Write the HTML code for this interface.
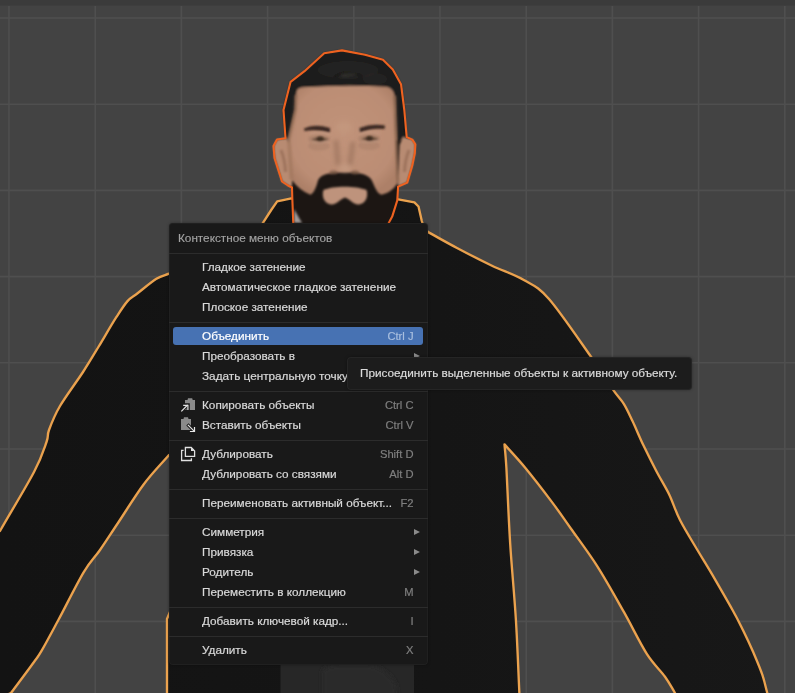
<!DOCTYPE html>
<html><head><meta charset="utf-8">
<style>
html,body{margin:0;padding:0;width:795px;height:693px;overflow:hidden;background:#434343;}
body{position:relative;font-family:"Liberation Sans",sans-serif;}
svg.scene{position:absolute;left:0;top:0;}
.menu{will-change:transform;position:absolute;left:169px;top:223px;width:259px;height:442px;background:#191919;border-radius:4px;box-shadow:inset 0 0 0 1px rgba(255,255,255,0.03),0 0 3px rgba(0,0,0,0.35);}
.row{-webkit-text-stroke:0.2px;position:absolute;left:0;width:259px;height:20px;color:#d9d9d9;font-size:11.75px;line-height:20px;}
.row .t{position:absolute;left:33px;top:0;white-space:nowrap;}
.row .k{position:absolute;right:14.5px;top:0;color:#7f7f7f;white-space:nowrap;font-size:11.2px;}
.row .a{position:absolute;right:8px;top:7px;width:0;height:0;border-left:6px solid #8a8a8a;border-top:3.5px solid transparent;border-bottom:3.5px solid transparent;}
.hdr{-webkit-text-stroke:0.15px;position:absolute;left:9px;top:5px;color:#a3a3a3;font-size:11.75px;line-height:20px;white-space:nowrap;}
.sep{position:absolute;left:0;width:259px;height:1px;background:#2c2c2c;}
.hl{position:absolute;left:4px;top:104px;width:250px;height:18px;background:#4772b3;border-radius:3px;}
.tip{will-change:transform;position:absolute;left:347px;top:357px;width:345px;height:32.5px;background:#1c1c1c;border-radius:4px;color:#dadada;font-size:11.75px;line-height:32px;box-shadow:inset 0 0 0 1px rgba(255,255,255,0.045),0 0 3px rgba(0,0,0,0.35);}
.tip span{-webkit-text-stroke:0.2px;position:absolute;left:13px;top:0;white-space:nowrap;}
</style></head>
<body>
<svg class="scene" width="795" height="693" viewBox="0 0 795 693">
  <defs><linearGradient id="jk" gradientUnits="userSpaceOnUse" x1="0" y1="0" x2="795" y2="0"><stop offset="0" stop-color="#131313"/><stop offset="0.55" stop-color="#151515"/><stop offset="1" stop-color="#181818"/></linearGradient></defs>
  <rect x="0" y="0" width="795" height="693" fill="#434343"/>
  <rect x="0" y="0" width="795" height="5.5" fill="#3b3b3b"/>
  <g stroke="#4f4f4f" stroke-width="1.6">
    <line x1="9" y1="6" x2="9" y2="693"/>
    <line x1="95.2" y1="6" x2="95.2" y2="693"/>
    <line x1="181.4" y1="6" x2="181.4" y2="693"/>
    <line x1="267.6" y1="6" x2="267.6" y2="693"/>
    <line x1="353.8" y1="6" x2="353.8" y2="693"/>
    <line x1="440" y1="6" x2="440" y2="693"/>
    <line x1="526.2" y1="6" x2="526.2" y2="693"/>
    <line x1="612.4" y1="6" x2="612.4" y2="693"/>
    <line x1="698.6" y1="6" x2="698.6" y2="693"/>
    <line x1="784.8" y1="6" x2="784.8" y2="693"/>
    <line x1="0" y1="18" x2="795" y2="18"/>
    <line x1="0" y1="104.2" x2="795" y2="104.2"/>
    <line x1="0" y1="190.4" x2="795" y2="190.4"/>
    <line x1="0" y1="276.6" x2="795" y2="276.6"/>
    <line x1="0" y1="362.8" x2="795" y2="362.8"/>
    <line x1="0" y1="449" x2="795" y2="449"/>
    <line x1="0" y1="535.2" x2="795" y2="535.2"/>
    <line x1="0" y1="621.4" x2="795" y2="621.4"/>
  </g>
  <!-- jacket -->
  <path id="jacket" d="M169,273.7 C164.8,275.4 161.6,275.6 156.4,278.8 C151.2,282.1 142.4,289.5 137.6,293.2 C132.8,296.9 131.1,297 127.5,301.1 C123.9,305.2 120.8,310.2 116,317.7 C111.2,325.2 104.5,336.9 99,346 C93.5,355.1 89.5,362 83,372 C76.5,382 65.7,396.3 60,406 C54.3,415.7 51.2,424 49,430 C46.8,436 49,435 46.5,442 C44,449 41.8,457.2 34,472 C26.2,486.8 11.3,511.3 0,531 L-5,531 L-5,700 L11,693 C18.7,682.7 28.9,669.1 34,662 C39.1,654.9 37.7,657.4 41.8,650.4 C45.9,643.4 51.5,632.8 58.5,619.8 C65.5,606.8 76.7,584 83.6,572.4 C90.5,560.8 94.2,558.3 100,550 C105.8,541.7 111,533.4 118.3,522.5 C125.6,511.6 135.2,495.8 143.6,484.5 C152,473.2 160.5,464.8 169,455 L175,455 L175,600 L167,619 L167,700 L519.7,700 C518.4,673.3 517.5,645.8 515.9,619.8 C514.3,593.8 511.8,569.2 510.2,543.9 C508.6,518.6 507.3,484.6 506.4,468 C505.4,451.4 505.1,452.3 504.5,444.4 C511.5,452.3 517.5,458.4 525.4,468 C533.3,477.6 544.4,492 552,502.1 C559.6,512.2 563.4,518 571,528.7 C578.6,539.5 588.7,552.7 597.5,566.6 C606.3,580.5 615.8,597.7 624,612.2 C632.2,626.8 640,643.1 646.8,653.9 C653.6,664.6 660.3,670.2 665,676.7 C669.7,683.2 671.7,687.6 675,693 L676,700 L768,700 L767.3,693 C765.6,686.9 764.6,681.5 762.3,674.7 C760,667.9 756.5,659.8 753.3,652.3 C750,644.8 746.3,636.9 742.8,629.8 C739.3,622.7 737.5,618.9 732.4,609.8 C727.3,600.6 718.2,584.9 712.4,574.9 C706.6,564.9 702.8,559.1 697.4,550 C692,540.9 684.7,529.2 680,520 C675.3,510.8 673.2,502.9 669.3,494.7 C665.3,486.5 660.6,479.3 656.3,471 C652,462.7 647.3,453.3 643.3,445 C639.3,436.7 635.8,427.9 632.5,421 C629.2,414.1 627,409 623.8,403.8 C620.5,398.6 618.5,397.7 613,389.7 C607.5,381.7 601.2,371.1 590.5,356 C579.8,340.9 560.1,311.7 549,299 C537.9,286.3 533.3,285.6 523.8,280 C514.3,274.4 503.1,271 492,265.7 C480.9,260.4 467.6,253.6 457,248 C446.4,242.4 438.1,237.6 428.6,232.4 L424,228 L421.8,221 L418.5,206.5 L414.4,202.4 L398.3,199.4 L300,199 L291.3,198.4 L277.2,201.4 L271.2,210 L263.1,222.6 L256,233.6 L240,250 L169,273.7" fill="url(#jk)" stroke="#eba24e" stroke-width="2.35" stroke-linejoin="round"/>
<!-- shirt -->
  <rect x="280.5" y="655" width="133.5" height="40" fill="#272727"/>
  <path d="M322,700 L322,672 Q324,665 340,665 L368,665 Q385,666 396,684 L398,700 Z" fill="#2c2c2c" filter="url(#bl3)"/>
  <!-- head -->
  <defs>
    <filter id="bl1" x="-20%" y="-20%" width="140%" height="140%"><feGaussianBlur stdDeviation="0.9"/></filter>
    <filter id="bl2" x="-50%" y="-50%" width="200%" height="200%"><feGaussianBlur stdDeviation="1.2"/></filter>
    <filter id="bl3" x="-50%" y="-50%" width="200%" height="200%"><feGaussianBlur stdDeviation="2.2"/></filter>
    <radialGradient id="skin" cx="0.5" cy="0.45" r="0.6">
      <stop offset="0" stop-color="#c1937a"/>
      <stop offset="0.8" stop-color="#bb8d74"/>
      <stop offset="1" stop-color="#ad8068"/>
    </radialGradient>
  </defs>
  <path d="M293.3,224 L292.3,198.4 L292,187.5 L288,185.5 L282,181.5 L274.5,158 L273.5,146 L277,139.5 L285.5,138.2 L283.5,110 L290.6,81.8 L304.5,71.2 L324.2,53.2 L342,50.4 L365,54.8 L383,59.7 L392.8,69.5 L401,84.2 L404.3,110 L406.7,137.1 L412.3,139.6 L415.3,144.2 L414.8,153.3 L412.3,165.4 L407.2,182.6 L398.1,186.6 L397.3,200.4 L392.2,216.6 L388.2,224 Z" fill="#1c1613"/>
  <g filter="url(#bl1)">
    <!-- hair -->
    <path d="M342,50.4 L324.2,53.2 L304.5,71.2 L290.6,81.8 L283.3,110 L286,140 L296,140 L296,95 L301.3,87.5 L345.4,85 L386.3,86.7 L394.5,95.7 L396,140 L405,140 L404.3,110 L401,84.2 L392.8,69.5 L383,59.7 L365,54.8 Z" fill="#1e1d1c"/>
    <ellipse cx="348" cy="70" rx="30" ry="9" fill="#2a2826" opacity="0.55"/>
    <ellipse cx="375" cy="79" rx="12" ry="6" fill="#2a2826" opacity="0.5"/>
    <path d="M334,77 Q346,69 362,76" stroke="#141211" stroke-width="2" fill="none" opacity="0.7"/>
    <path d="M340,74 Q350,71 358,74 Q350,78 342,77 Z" fill="#353331" opacity="0.6"/>
    <!-- ears -->
    <path d="M287,138.2 L277,139.5 L273.5,146 L274.5,158 L282,181.5 L288,185.5 L292,187.5 L292,175 L290,145 Z" fill="#b88b72"/>
    <path d="M403,137.1 L412.3,139.6 L415.3,144.2 L414.8,153.3 L412.3,165.4 L407.2,182.6 L398.1,186.6 L398,175 L399.5,145 Z" fill="#b88b72"/>
    <path d="M281,150 Q285,160 285.5,172" stroke="#8a634e" stroke-width="3" fill="none" opacity="0.6"/>
    <path d="M409,150 Q405,160 404.5,172" stroke="#8a634e" stroke-width="3" fill="none" opacity="0.6"/>
    <!-- face skin -->
    <path d="M296.4,92.4 Q297,87.8 303,87.3 Q345,84.5 386.3,86.7 Q393.5,88 394.5,95.7 L395,110 L396,140 L397.7,182.9 Q391,193 381.4,194.8 C376,193 374.5,185 371,179 C366,173 356,172.5 345,172.5 C334,172.5 324,173 319.5,178 C318,180 317.6,181 317.6,182 Q314.5,193 310.5,194.8 Q300,191 291.4,179.6 L289,150 L288.5,140 L295.5,110 Z" fill="url(#skin)"/>
    <!-- lip/chin patch -->
    <path d="M323.5,190 C333,185.5 356,185.5 366.5,190 C368.5,196 366,203.5 359,204.5 C354,205 351,200 345,197.5 C339,200 336,205 331,204.5 C324,203.5 321.5,196 323.5,190 Z" fill="#be937b"/>
  </g>
  <g filter="url(#bl2)">
    <!-- face edge shading -->
    <path d="M296,95 L295.5,110 L289,140 L291.4,179.6" stroke="#9a7058" stroke-width="4" fill="none" opacity="0.5"/>
    <path d="M394.5,95.7 L395,110 L396,140 L397.7,182.9" stroke="#9a7058" stroke-width="4" fill="none" opacity="0.5"/>
    <!-- eye bags -->
    <ellipse cx="319" cy="146" rx="11" ry="4.5" fill="#a47c66" opacity="0.45"/>
    <ellipse cx="369" cy="145.5" rx="11" ry="4.5" fill="#a47c66" opacity="0.45"/>
    <ellipse cx="319" cy="139" rx="11" ry="5" fill="#a37b65" opacity="0.5"/>
    <ellipse cx="369" cy="138.5" rx="11" ry="5" fill="#a37b65" opacity="0.5"/>
  </g>
  <g filter="url(#bl3)">
    <!-- nose shading broad -->
    <path d="M336,140 L338,165" stroke="#9a725b" stroke-width="5" fill="none" opacity="0.7"/>
    <path d="M353,142 L350,165" stroke="#9a725b" stroke-width="5" fill="none" opacity="0.7"/>
    <ellipse cx="345" cy="168" rx="6" ry="4" fill="#c69c83" opacity="0.7"/>
    <ellipse cx="344" cy="127" rx="8" ry="6" fill="#c59b82" opacity="0.5"/>
  </g>
  <g filter="url(#bl1)">
    <ellipse cx="333.5" cy="172.5" rx="4" ry="2.2" fill="#6e4e3e" opacity="0.6"/>
    <ellipse cx="355" cy="172.5" rx="4" ry="2.2" fill="#6e4e3e" opacity="0.6"/>
    <!-- eyebrows -->
    <path d="M304,128.5 Q314,123.5 330,128 L330,132.5 Q316,129 304.5,131 Z" fill="#3a2820"/>
    <path d="M359.5,128 Q372,123 385,125.5 L384.5,129 Q372,127.5 360,132.5 Z" fill="#3a2820"/>
    <!-- upper lid light -->
    <path d="M310,134 Q320,132 330,134.5" stroke="#caa08a" stroke-width="1.5" fill="none" opacity="0.6"/>
    <path d="M360,134 Q370,131.5 380,133.5" stroke="#caa08a" stroke-width="1.5" fill="none" opacity="0.6"/>
    <!-- eyes -->
    <path d="M311,139.5 Q320,134.5 329,139.5 Q320,142.5 311,139.5 Z" fill="#6a4f3e"/>
    <path d="M361,139 Q370,134 379,139 Q370,142 361,139 Z" fill="#6a4f3e"/>
    <ellipse cx="320.2" cy="138.9" rx="3.6" ry="2.6" fill="#3f2e22"/>
    <ellipse cx="369.5" cy="138.4" rx="3.6" ry="2.6" fill="#3f2e22"/>
    <path d="M312,142.3 Q320,144 328.5,141.5" stroke="#cfa890" stroke-width="1.2" fill="none" opacity="0.55"/>
    <path d="M362,141.8 Q370,143.5 378.5,141" stroke="#cfa890" stroke-width="1.2" fill="none" opacity="0.55"/>
  </g>
  <path d="M294,209 L294,223 L302,223 Z" fill="#a09a98" filter="url(#bl1)"/>
  <!-- head outline -->
  <path d="M293.3,224 L292.3,198.4 L292,187.5 L288,185.5 L282,181.5 L274.5,158 L273.5,146 L277,139.5 L285.5,138.2 L283.5,110 L290.6,81.8 L304.5,71.2 L324.2,53.2 L342,50.4 L365,54.8 L383,59.7 L392.8,69.5 L401,84.2 L404.3,110 L406.7,137.1 L412.3,139.6 L415.3,144.2 L414.8,153.3 L412.3,165.4 L407.2,182.6 L398.1,186.6 L397.3,200.4 L392.2,216.6 L388.2,224" fill="none" stroke="#ee6220" stroke-width="2.1" stroke-linejoin="round"/>
</svg>

<div class="menu">
  <div class="hdr">Контекстное меню объектов</div>
  <div class="sep" style="top:30px"></div>
  <div class="row" style="top:34px"><span class="t">Гладкое затенение</span></div>
  <div class="row" style="top:54px"><span class="t">Автоматическое гладкое затенение</span></div>
  <div class="row" style="top:74px"><span class="t">Плоское затенение</span></div>
  <div class="sep" style="top:99px"></div>
  <div class="hl"></div>
  <div class="row" style="top:103px"><span class="t" style="color:#fff">Объединить</span><span class="k" style="color:#a9bfdf">Ctrl J</span></div>
  <div class="row" style="top:123px"><span class="t">Преобразовать в</span><span class="a"></span></div>
  <div class="row" style="top:143px"><span class="t">Задать центральную точку</span><span class="a"></span></div>
  <div class="sep" style="top:168px"></div>
  <div class="row" style="top:172px"><span class="t">Копировать объекты</span><span class="k">Ctrl C</span></div>
  <div class="row" style="top:192px"><span class="t">Вставить объекты</span><span class="k">Ctrl V</span></div>
  <div class="sep" style="top:217px"></div>
  <div class="row" style="top:221px"><span class="t">Дублировать</span><span class="k">Shift D</span></div>
  <div class="row" style="top:241px"><span class="t">Дублировать со связями</span><span class="k">Alt D</span></div>
  <div class="sep" style="top:266px"></div>
  <div class="row" style="top:270px"><span class="t">Переименовать активный объект...</span><span class="k">F2</span></div>
  <div class="sep" style="top:295px"></div>
  <div class="row" style="top:299px"><span class="t">Симметрия</span><span class="a"></span></div>
  <div class="row" style="top:319px"><span class="t">Привязка</span><span class="a"></span></div>
  <div class="row" style="top:339px"><span class="t">Родитель</span><span class="a"></span></div>
  <div class="row" style="top:359px"><span class="t">Переместить в коллекцию</span><span class="k">M</span></div>
  <div class="sep" style="top:384px"></div>
  <div class="row" style="top:388px"><span class="t">Добавить ключевой кадр...</span><span class="k">I</span></div>
  <div class="sep" style="top:413px"></div>
  <div class="row" style="top:417px"><span class="t">Удалить</span><span class="k">X</span></div>
</div>


<svg style="position:absolute;left:0;top:0;will-change:transform" width="795" height="693" viewBox="0 0 795 693">
  <g>
    <!-- copy -->
    <path d="M185,400 L187.5,400 L188,398.2 L192.2,398.2 L192.7,400 L195,400 L195,410 L185,410 Z" fill="#8a8a8a"/>
    <path d="M180.8,411.8 L187.8,404.8" stroke="#1a1a1a" stroke-width="3.2"/>
    <path d="M182.6,404.8 L188.2,404.8 L188.2,410.4" stroke="#1a1a1a" stroke-width="3.2" fill="none"/>
    <path d="M181.3,411.3 L187.6,405" stroke="#e6e6e6" stroke-width="1.2"/>
    <path d="M183.2,405.3 L187.9,405.3 L187.9,410" stroke="#e6e6e6" stroke-width="1.2" fill="none"/>
    <!-- paste -->
    <path d="M181,419 L183.5,419 L184,417.2 L188,417.2 L188.5,419 L191,419 L191,430 L181,430 Z" fill="#8a8a8a"/>
    <path d="M187.4,424.4 L194.9,431.9" stroke="#1a1a1a" stroke-width="3.2"/>
    <path d="M189.4,431.9 L194.9,431.9 L194.9,426.4" stroke="#1a1a1a" stroke-width="3.2" fill="none"/>
    <path d="M187.9,424.9 L194.4,431.4" stroke="#e6e6e6" stroke-width="1.2"/>
    <path d="M189.9,431.5 L194.5,431.5 L194.5,427" stroke="#e6e6e6" stroke-width="1.2" fill="none"/>
    <!-- duplicate -->
    <path d="M183.6,450.3 L181.6,450.3 L181.6,460.5 L191.4,460.5 L191.4,458.2" stroke="#e0e0e0" stroke-width="1.3" fill="none"/>
    <path d="M185.4,447.5 L191.2,447.5 L194.6,450.9 L194.6,456.3 L185.4,456.3 Z" stroke="#e0e0e0" stroke-width="1.3" fill="none"/>
    <path d="M191,447.5 L194.6,451.1 L191,451.1 Z" fill="#e0e0e0"/>
  </g>
</svg>
<div class="tip"><span>Присоединить выделенные объекты к активному объекту.</span></div>
</body></html>
